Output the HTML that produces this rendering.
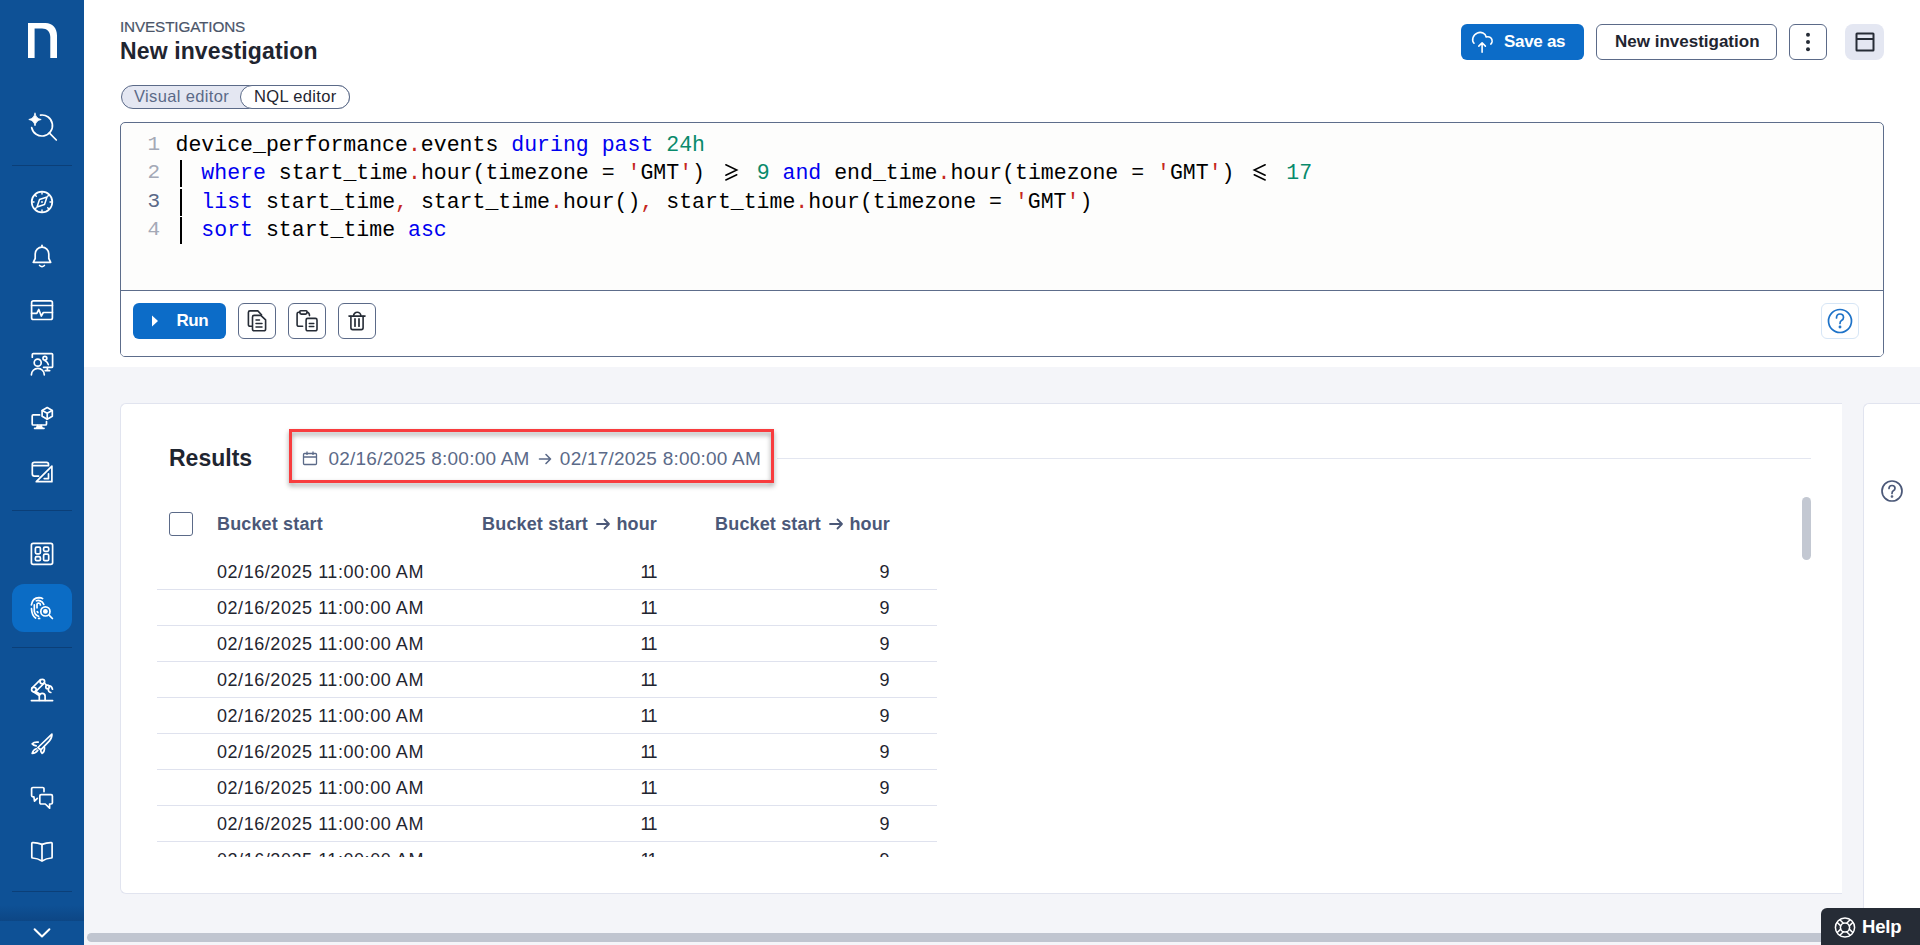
<!DOCTYPE html>
<html><head><meta charset="utf-8">
<style>
*{box-sizing:border-box;margin:0;padding:0}
html,body{width:1920px;height:945px;overflow:hidden;background:#fff;font-family:"Liberation Sans",sans-serif;color:#1f2530}
.abs{position:absolute;white-space:nowrap}
#side{position:absolute;left:0;top:0;width:84px;height:945px;background:#0e5196}
.div{position:absolute;left:12px;width:60px;height:1px;background:#0b3f78}
#active{position:absolute;left:12px;top:584px;width:60px;height:48px;border-radius:12px;background:#0b6cc5}
#graybg{position:absolute;left:84px;top:367px;width:1836px;height:578px;background:#f4f5f9}
.obtn{position:absolute;border:1px solid #5b6a88;border-radius:6px;background:#fff}
.mono{font-family:"Liberation Mono",monospace}
#code{position:absolute;left:120px;top:122px;width:1764px;height:235px;border:1px solid #5d6d8b;border-radius:5px;background:#fdfdfc}
.ln{position:absolute;left:-1px;width:40px;text-align:right;color:#a4a9b6;font-family:"Liberation Mono",monospace;font-size:21px}
.cl{position:absolute;left:54.5px;font-family:"Liberation Mono",monospace;font-size:21.52px;color:#000;white-space:pre}
.k{color:#0000f0}.n{color:#098a6b}.p{color:#c6281e}
.pipe{display:inline-block;width:12.94px;position:relative}
.pipe:before{content:"";position:absolute;left:4.5px;top:-19px;width:2px;height:26.5px;background:#000}
.ge{display:inline-block;width:25.88px;position:relative;color:transparent}
.ge svg{position:absolute;left:0;top:0;overflow:visible}
.arr{position:relative;color:transparent}
.arr svg{position:absolute;left:50%;top:50%;overflow:visible}
.row{position:absolute;left:157px;width:780px;height:1px;background:#dfe2ee}
.rt{position:absolute;font-size:18px;letter-spacing:0.55px;color:#1f2530}
</style></head><body>
<div id="side">
  <svg class="abs" style="left:28px;top:23px" width="29" height="35" viewBox="0 0 29 35"><path d="M0 35 V0 H17.5 C24.5 0 29 5 29 12.5 V35 H22.3 V14 C22.3 8.8 19 5.5 14 5.5 H6.6 V35 Z" fill="#fff"/></svg>
  <div class="div" style="top:165px"></div>
  <div class="div" style="top:510px"></div>
  <div id="active"></div>
  <div class="div" style="top:647px"></div>
  <div class="div" style="top:891px"></div>
  <div class="abs" style="left:0;top:905px;width:84px;height:16px;background:linear-gradient(to bottom,rgba(10,50,100,0),rgba(10,50,100,0.35))"></div>
  <svg class="abs" style="left:0;top:0" width="84" height="945" viewBox="0 0 84 945" fill="none" stroke="#fff" stroke-width="1.7" stroke-linecap="round" stroke-linejoin="round">
    <!-- search sparkle -->
    <path d="M40.5 115.1 A10.5 10.5 0 1 1 31.7 127.7"/>
    <path d="M49.5 133.2 L56.3 140"/>
    <path d="M35 113.2 Q35.9 118.6 41.2 119.5 Q35.9 120.4 35 125.8 Q34.1 120.4 28.8 119.5 Q34.1 118.6 35 113.2 Z" fill="#fff" stroke-width="0.8"/>
    <!-- compass -->
    <circle cx="42" cy="202" r="10.3"/>
    <path d="M42 192.5 V194 M42 210 V211.5 M32.5 202 H34 M50 202 H51.5 M35.3 195.3 L36.3 196.3 M47.7 207.7 L48.7 208.7 M48.7 195.3 L47.7 196.3 M36.3 207.7 L35.3 208.7" stroke-width="1.4"/>
    <path d="M47 197 L44.5 204.5 L37 207 L39.5 199.5 Z" stroke-width="1.5"/>
    <circle cx="42" cy="202" r="0.9" fill="#fff" stroke="none"/>
    <!-- bell -->
    <path d="M33.3 262.3 H50.7 L48.8 258.5 V254 A6.8 6.8 0 0 0 35.2 254 V258.5 Z"/>
    <path d="M42 245.3 V247.2"/><path d="M39.6 265.5 Q42 267.8 44.4 265.5"/>
    <!-- chart -->
    <rect x="31.6" y="300.9" width="20.8" height="18.6" rx="1.8"/>
    <path d="M31.6 305.5 H52.4"/><path d="M31.6 313.3 H36.8 L38.8 309.5 L41.3 316 L43.3 312.5 H52.4"/>
    <!-- people board -->
    <path d="M32.3 357.2 V354.6 A1 1 0 0 1 33.3 353.6 H51.6 A1 1 0 0 1 52.6 354.6 V366.4 A1 1 0 0 1 51.6 367.4 H43.6"/>
    <path d="M47.4 367.6 V370.4 M45.2 370.6 H49.7"/>
    <circle cx="37.7" cy="362.7" r="3.5"/><path d="M31.4 374.8 A6.45 6.45 0 0 1 44.3 374.8"/>
    <circle cx="44.9" cy="358.3" r="1.9"/><path d="M45.2 360.8 Q47.5 361.8 48.3 364.6"/>
    <!-- devices -->
    <path d="M39.6 414.9 H33.2 A1 1 0 0 0 32.2 415.9 V424 A1 1 0 0 0 33.2 425 H45.5 A1 1 0 0 0 46.5 424 V421.6"/>
    <path d="M37.6 425.5 L36.6 428 H42.1 L41.1 425.5" fill="#fff"/><path d="M34.6 428.3 H44"/>
    <path d="M47.2 407.6 L52.3 410.5 V416.3 L47.2 419.2 L42.1 416.3 V410.5 Z"/><path d="M42.3 410.6 L47.2 413.3 L52.1 410.6 M47.2 413.3 V419"/>
    <!-- edit card -->
    <path d="M38.6 476.1 H34.3 A2 2 0 0 1 32.3 474.1 V464.3 A2 2 0 0 1 34.3 462.3 H46.5 A2 2 0 0 1 48.5 464.3 V465.7 H32.3"/>
    <path d="M51.9 466.1 V481.7 H36.3 Z"/><path d="M48.5 473.8 V478.6 H44.2"/>
    <!-- grid -->
    <rect x="31.4" y="543.4" width="21.2" height="21" rx="1.8"/>
    <rect x="35.4" y="547.2" width="5" height="6.6" rx="1.3"/><rect x="43.6" y="547.2" width="5.1" height="4.1" rx="1.3"/>
    <rect x="35.4" y="556.7" width="5" height="4" rx="1.3"/><rect x="43.6" y="554.2" width="5.1" height="6.5" rx="1.3"/>
    <!-- fingerprint -->
    <path d="M31.4 604.8 Q32.5 597.8 39 597.6 Q41.3 597.6 42.6 598.6"/>
    <path d="M31.5 608.7 Q31.8 615.3 35.6 618"/>
    <path d="M36.4 600.8 Q39 599.4 42.4 602.2 Q43.5 603.6 43.8 604.5"/>
    <path d="M34.3 604.9 V611.3 Q34.8 614.8 38.6 616.2"/>
    <path d="M37 607.8 V604.7 Q37 603 38.7 603 Q40.4 603.2 40.4 605"/>
    <path d="M37.2 611.6 L37.9 612.6"/><path d="M38.6 618.4 H39.6"/>
    <circle cx="45.4" cy="611.4" r="4.6"/><circle cx="45.4" cy="611.4" r="2.4" fill="#fff" stroke="none"/>
    <path d="M49.3 615.4 L52.4 618.5"/>
    <!-- robot -->
    <path d="M31.4 700.6 H52.6"/>
    <path d="M39.3 700.3 V696.2 A2.9 2.9 0 0 1 45.1 696.2 V700.3"/>
    <circle cx="33.9" cy="689.6" r="2.3"/><circle cx="42.3" cy="681.6" r="2.3"/>
    <path d="M32 688 L40.5 679.7 M35.6 691.6 L43.9 683.5"/>
    <path d="M35.7 691.5 L40 694.3 M33.8 692 L38.8 695.3"/>
    <path d="M44.3 683 L46.3 685"/>
    <circle cx="47.5" cy="686.9" r="1.7"/>
    <path d="M49 685.8 Q51.6 685.5 52.5 689.2 M48.3 688.6 Q48 692 50.8 692.5"/>
    <!-- rocket -->
    <path d="M37.9 747.5 L51.9 734.2 Q52.3 737.5 49.2 741.2 L40.8 749.9 Z"/>
    <path d="M38.2 742.2 Q34 741.8 32.2 743.9 Q33.5 745.4 36.2 745.8"/>
    <path d="M44.4 747 Q45 751.4 42.1 753.4 Q40.5 751.9 40.6 749.3"/>
    <path d="M36.3 748.7 Q33 749.8 32.2 753.5 Q35.8 753.2 37.8 750.2"/>
    <!-- chat -->
    <path d="M44 791.6 V788.8 A1.3 1.3 0 0 0 42.7 787.5 H32.9 A1.3 1.3 0 0 0 31.6 788.8 V795.5 A1.3 1.3 0 0 0 32.9 796.8 H33.9 L34.5 801.2 L37.3 798.3"/>
    <path d="M41.1 794.7 H51.1 A1.3 1.3 0 0 1 52.4 796 V802.7 A1.3 1.3 0 0 1 51.1 804 H49.6 V808.2 L45.3 804 H41.1 A1.3 1.3 0 0 1 39.8 802.7 V796 A1.3 1.3 0 0 1 41.1 794.7 Z"/>
    <!-- book -->
    <path d="M42 844.4 Q37 842.4 32.6 842.6 Q31.8 842.7 31.8 843.6 V857.2 Q31.8 858 32.6 858 Q37.5 858.3 42 861 Q46.5 858.3 51.3 858 Q52.1 858 52.1 857.2 V843.6 Q52.1 842.7 51.3 842.6 Q47 842.4 42 844.4 Z"/><path d="M42 844.6 V860.5"/>
    <!-- chevron -->
    <path d="M34.6 929.2 L42 936.5 L49.4 929.2" stroke-width="2"/>
  </svg>
</div>
<div id="graybg"></div>

<!-- header -->
<div class="abs" style="left:120px;top:17.6px;font-size:15.3px;color:#4b5569;letter-spacing:-0.15px;-webkit-text-stroke:0.2px #4b5569">INVESTIGATIONS</div>
<div class="abs" style="left:120px;top:38px;font-size:23px;letter-spacing:0.12px;font-weight:bold;color:#1f2530">New investigation</div>

<div class="abs" style="left:1461px;top:24px;width:123px;height:36px;border-radius:6px;background:#0c6cc8"></div>
<svg class="abs" style="left:1470px;top:29px" width="26" height="26" viewBox="0 0 26 26" fill="none" stroke="#fff" stroke-width="1.6" stroke-linecap="round" stroke-linejoin="round">
  <path d="M4 14.2 C1.6 11.8 2.4 5.8 7.4 3.9 C11.4 2.5 15.4 4.3 16.2 8 C19.6 7 22.6 9.4 22.1 12.7 C21.9 13.8 21.4 14.6 20.8 15.1"/>
  <path d="M12.1 23.2 V13.9 M8.8 17.1 L12.1 13.8 L15.4 17.1"/>
</svg>
<div class="abs" style="left:1504px;top:32px;font-size:17px;letter-spacing:-0.3px;font-weight:bold;color:#fff">Save as</div>

<div class="obtn" style="left:1596px;top:24px;width:181px;height:36px"></div>
<div class="abs" style="left:1615px;top:32px;font-size:17px;font-weight:bold;color:#1f2530">New investigation</div>

<div class="obtn" style="left:1789px;top:24px;width:38px;height:36px"></div>
<svg class="abs" style="left:1789px;top:24px" width="38" height="36"><circle cx="19" cy="10.8" r="2" fill="#262c36"/><circle cx="19" cy="18" r="2" fill="#262c36"/><circle cx="19" cy="25.3" r="2" fill="#262c36"/></svg>

<div class="abs" style="left:1845px;top:24px;width:39px;height:36px;border-radius:8px;background:#e4e7f2"></div>
<svg class="abs" style="left:1845px;top:24px" width="39" height="36" fill="none" stroke="#262c36" stroke-width="2"><rect x="11.5" y="9.5" width="17" height="17" rx="0.5"/><path d="M11.5 15 H28.5"/></svg>

<!-- pill -->
<div class="abs" style="left:121px;top:85px;width:229px;height:24px;border:1px solid #5b6a88;border-radius:12px;background:#e4e7f2"></div>
<div class="abs" style="left:240px;top:85px;width:110px;height:24px;border:1px solid #5b6a88;border-radius:12px;background:#fff"></div>
<div class="abs" style="left:134px;top:87px;font-size:16.5px;letter-spacing:0.35px;color:#5b6a88">Visual editor</div>
<div class="abs" style="left:254px;top:87px;font-size:16.5px;letter-spacing:0.35px;color:#1f2530">NQL editor</div>

<!-- code editor -->
<div id="code">
  <div class="ln" style="top:9.5px">1</div>
  <div class="ln" style="top:37.5px">2</div>
  <div class="ln" style="top:66.5px;color:#5b6a88">3</div>
  <div class="ln" style="top:94.5px">4</div>
  <div class="cl" style="top:10px">device_performance<span class="p">.</span>events <span class="k">during</span> <span class="k">past</span> <span class="n">24h</span></div>
  <div class="cl" style="top:38px"><span class="pipe"></span> <span class="k">where</span> start_time<span class="p">.</span>hour(timezone = <span class="p">'</span>GMT<span class="p">'</span>) <span class="ge">≥<svg width="26" height="24" fill="none" stroke="#000" stroke-width="1.5" stroke-linecap="round" stroke-linejoin="miter"><path d="M7.8 3.8 L18.8 9 L7.8 14.2 M7.8 19 L18.8 13.8"/></svg></span> <span class="n">9</span> <span class="k">and</span> end_time<span class="p">.</span>hour(timezone = <span class="p">'</span>GMT<span class="p">'</span>) <span class="ge">≤<svg width="26" height="24" fill="none" stroke="#000" stroke-width="1.5" stroke-linecap="round" stroke-linejoin="miter"><path d="M18.2 3.8 L7.2 9 L18.2 14.2 M18.2 19 L7.2 13.8"/></svg></span> <span class="n">17</span></div>
  <div class="cl" style="top:67px"><span class="pipe"></span> <span class="k">list</span> start_time<span class="p">,</span> start_time<span class="p">.</span>hour()<span class="p">,</span> start_time<span class="p">.</span>hour(timezone = <span class="p">'</span>GMT<span class="p">'</span>)</div>
  <div class="cl" style="top:95px"><span class="pipe"></span> <span class="k">sort</span> start_time <span class="k">asc</span></div>
  <div class="abs" style="left:0;top:167px;width:1762px;height:66px;background:#fff;border-top:1px solid #5d6d8b;border-radius:0 0 4px 4px"></div>
</div>
<div class="abs" style="left:133px;top:303px;width:93px;height:36px;border-radius:6px;background:#0c6cc8"></div>
<svg class="abs" style="left:150px;top:314px" width="10" height="14"><path d="M2 1.5 L8 7 L2 12.5 Z" fill="#fff"/></svg>
<div class="abs" style="left:176.5px;top:311px;font-size:17px;letter-spacing:-0.5px;font-weight:bold;color:#fff">Run</div>
<div class="obtn" style="left:238px;top:303px;width:38px;height:36px"></div>
<div class="obtn" style="left:288px;top:303px;width:38px;height:36px"></div>
<div class="obtn" style="left:338px;top:303px;width:38px;height:36px"></div>
<svg class="abs" style="left:0;top:0" width="400" height="360" fill="none" stroke="#262c36" stroke-width="1.6" stroke-linejoin="round" stroke-linecap="round">
  <path d="M252 326.3 H250 A1.6 1.6 0 0 1 248.4 324.7 V312.5 A1.6 1.6 0 0 1 250 310.9 H257.8 L261.5 314.8"/>
  <path d="M252.5 329.2 V317 A1.6 1.6 0 0 1 254.1 315.4 H260.8 L265.6 319.9 V329.2 A1.6 1.6 0 0 1 264 330.8 H254.1 A1.6 1.6 0 0 1 252.5 329.2 Z"/>
  <path d="M256 320.1 H259.5 M256 323.5 H262 M256 326.9 H262" stroke-width="1.5"/>
  <path d="M302.6 326.3 H298.7 A1.6 1.6 0 0 1 297.1 324.7 V313.8 A1.6 1.6 0 0 1 298.7 312.2 H299.8 M307 312.2 Q309.5 312.4 309.5 315.6"/>
  <path d="M299.8 312.5 V311.6 A0.8 0.8 0 0 1 300.6 310.8 H306.2 A0.8 0.8 0 0 1 307 311.6 V312.6 A1.5 1.5 0 0 1 305.5 314.1 H301.3 A1.5 1.5 0 0 1 299.8 312.6"/>
  <path d="M307.7 318.4 H315.4 A1.6 1.6 0 0 1 317 320 V329.2 A1.6 1.6 0 0 1 315.4 330.8 H307.7 A1.6 1.6 0 0 1 306.1 329.2 V320 A1.6 1.6 0 0 1 307.7 318.4 Z"/>
  <path d="M309.3 323.6 H313.8 M309.3 326.4 H313.8" stroke-width="1.5"/>
  <path d="M349 316.1 H365"/><path d="M353.5 316 A3.7 3.7 0 0 1 360.9 316"/>
  <path d="M350.9 316.3 V327.8 A1.8 1.8 0 0 0 352.7 329.6 H361.3 A1.8 1.8 0 0 0 363.1 327.8 V316.3"/><path d="M355 318.9 V326.2 M359 318.9 V326.2" stroke-width="1.7"/>
</svg>
<div class="abs" style="left:1821px;top:303px;width:38px;height:36px;border:1px solid #d7e6f6;border-radius:6px;background:#fff"></div>
<svg class="abs" style="left:1821px;top:302px" width="38" height="38" fill="none" stroke="#1d72c8" stroke-width="1.7" stroke-linecap="round"><circle cx="19" cy="19" r="11.5"/><path d="M15.5 16 Q15.5 12 19 12 Q22.5 12 22.5 15.5 Q22.5 17.5 20.5 18.5 Q19 19.3 19 21.5"/><circle cx="19" cy="25" r="0.6" fill="#1d72c8"/></svg>

<!-- results card -->
<div class="abs" style="left:120px;top:403px;width:1722px;height:491px;background:#fff;border:1px solid #e1e4ef;border-right:none;border-radius:6px 0 0 6px"></div>
<div class="abs" style="left:1863px;top:403px;width:57px;height:542px;background:#fff;border:1px solid #e1e4ef;border-right:none;border-bottom:none;border-radius:6px 0 0 0"></div>
<svg class="abs" style="left:1880px;top:479px" width="24" height="24" fill="none" stroke="#4b5878" stroke-width="1.7" stroke-linecap="round"><circle cx="12" cy="12" r="10"/><path d="M9 9.5 Q9 6.5 12 6.5 Q15 6.5 15 9.3 Q15 11 13.3 11.8 Q12 12.5 12 14.5"/><circle cx="12" cy="17.5" r="0.5" fill="#4b5878"/></svg>

<div class="abs" style="left:169px;top:445px;font-size:23px;font-weight:bold;color:#1f2530">Results</div>
<div class="abs" style="left:777px;top:458px;width:1034px;height:1px;background:#e3e6f0"></div>
<div class="abs" style="left:289px;top:429px;width:485px;height:54px;border:3px solid #f83c3e;filter:drop-shadow(0 3px 2.5px rgba(0,0,0,0.38))"></div>
<svg class="abs" style="left:302px;top:450px" width="17" height="17" fill="none" stroke="#5b6a88" stroke-width="1.3"><rect x="1.5" y="3.5" width="13" height="11" rx="1"/><path d="M1.5 7 H14.5 M5 1.5 V5 M11 1.5 V5"/></svg>
<div class="abs" style="left:328.5px;top:447.5px;font-size:19px;letter-spacing:0.22px;color:#5b6a88">02/16/2025 8:00:00 AM <span class="arr">→<svg width="16" height="12" style="margin-left:-8px;margin-top:-5px" fill="none" stroke="#5b6a88" stroke-width="1.6" stroke-linecap="round" stroke-linejoin="round"><path d="M2.5 6 H13.5 M9 1.5 L13.5 6 L9 10.5"/></svg></span> 02/17/2025 8:00:00 AM</div>

<div class="abs" style="left:169px;top:512px;width:24px;height:24px;border:1px solid #5b6a88;border-radius:3px;background:#fff"></div>
<div class="abs" style="left:217px;top:514px;font-size:18px;letter-spacing:0.15px;font-weight:bold;color:#4b5878">Bucket start</div>
<div class="abs" style="left:457px;top:514px;width:200px;text-align:right;font-size:18px;letter-spacing:0.15px;font-weight:bold;color:#4b5878">Bucket start <span class="arr">→<svg width="16" height="12" style="margin-left:-7px;margin-top:-6px" fill="none" stroke="#4b5878" stroke-width="1.8" stroke-linecap="round" stroke-linejoin="round"><path d="M2 6 H14 M9.5 1.5 L14 6 L9.5 10.5"/></svg></span> hour</div>
<div class="abs" style="left:690px;top:514px;width:200px;text-align:right;font-size:18px;letter-spacing:0.15px;font-weight:bold;color:#4b5878">Bucket start <span class="arr">→<svg width="16" height="12" style="margin-left:-7px;margin-top:-6px" fill="none" stroke="#4b5878" stroke-width="1.8" stroke-linecap="round" stroke-linejoin="round"><path d="M2 6 H14 M9.5 1.5 L14 6 L9.5 10.5"/></svg></span> hour</div>

<div id="rows" class="abs" style="left:0;top:0;width:1000px;height:857px;overflow:hidden">
<div class="rt" style="left:217px;top:561.7px">02/16/2025 11:00:00 AM</div>
<div class="rt" style="left:556px;top:561.7px;width:100px;text-align:right;letter-spacing:-1.6px">11</div>
<div class="rt" style="left:790px;top:561.7px;width:100px;text-align:right">9</div>
<div class="row" style="top:589px"></div>
<div class="rt" style="left:217px;top:597.7px">02/16/2025 11:00:00 AM</div>
<div class="rt" style="left:556px;top:597.7px;width:100px;text-align:right;letter-spacing:-1.6px">11</div>
<div class="rt" style="left:790px;top:597.7px;width:100px;text-align:right">9</div>
<div class="row" style="top:625px"></div>
<div class="rt" style="left:217px;top:633.7px">02/16/2025 11:00:00 AM</div>
<div class="rt" style="left:556px;top:633.7px;width:100px;text-align:right;letter-spacing:-1.6px">11</div>
<div class="rt" style="left:790px;top:633.7px;width:100px;text-align:right">9</div>
<div class="row" style="top:661px"></div>
<div class="rt" style="left:217px;top:669.7px">02/16/2025 11:00:00 AM</div>
<div class="rt" style="left:556px;top:669.7px;width:100px;text-align:right;letter-spacing:-1.6px">11</div>
<div class="rt" style="left:790px;top:669.7px;width:100px;text-align:right">9</div>
<div class="row" style="top:697px"></div>
<div class="rt" style="left:217px;top:705.7px">02/16/2025 11:00:00 AM</div>
<div class="rt" style="left:556px;top:705.7px;width:100px;text-align:right;letter-spacing:-1.6px">11</div>
<div class="rt" style="left:790px;top:705.7px;width:100px;text-align:right">9</div>
<div class="row" style="top:733px"></div>
<div class="rt" style="left:217px;top:741.7px">02/16/2025 11:00:00 AM</div>
<div class="rt" style="left:556px;top:741.7px;width:100px;text-align:right;letter-spacing:-1.6px">11</div>
<div class="rt" style="left:790px;top:741.7px;width:100px;text-align:right">9</div>
<div class="row" style="top:769px"></div>
<div class="rt" style="left:217px;top:777.7px">02/16/2025 11:00:00 AM</div>
<div class="rt" style="left:556px;top:777.7px;width:100px;text-align:right;letter-spacing:-1.6px">11</div>
<div class="rt" style="left:790px;top:777.7px;width:100px;text-align:right">9</div>
<div class="row" style="top:805px"></div>
<div class="rt" style="left:217px;top:813.7px">02/16/2025 11:00:00 AM</div>
<div class="rt" style="left:556px;top:813.7px;width:100px;text-align:right;letter-spacing:-1.6px">11</div>
<div class="rt" style="left:790px;top:813.7px;width:100px;text-align:right">9</div>
<div class="row" style="top:841px"></div>
<div class="rt" style="left:217px;top:849.7px">02/16/2025 11:00:00 AM</div>
<div class="rt" style="left:556px;top:849.7px;width:100px;text-align:right;letter-spacing:-1.6px">11</div>
<div class="rt" style="left:790px;top:849.7px;width:100px;text-align:right">9</div>
</div>

<div class="abs" style="left:1802px;top:497px;width:9px;height:63px;border-radius:5px;background:#c3c8d2"></div>
<div class="abs" style="left:87px;top:933px;width:1750px;height:9px;border-radius:5px;background:#c0c5d0"></div>

<div class="abs" style="left:1821px;top:908px;width:99px;height:37px;border-radius:6px 0 0 0;background:#262c36"></div>
<svg class="abs" style="left:1833px;top:916px" width="24" height="24" fill="none" stroke="#fff" stroke-width="1.5" stroke-linecap="round"><circle cx="12" cy="11.5" r="9.6"/><circle cx="12" cy="11.5" r="4.6"/><path d="M16.31 13.12 L19.78 16.59 M13.62 15.81 L17.09 19.28 M10.38 15.81 L6.91 19.28 M7.69 13.12 L4.22 16.59 M7.69 9.88 L4.22 6.41 M10.38 7.19 L6.91 3.72 M13.62 7.19 L17.09 3.72 M16.31 9.88 L19.78 6.41"/></svg>
<div class="abs" style="left:1862px;top:916px;font-size:18.5px;letter-spacing:-0.2px;font-weight:bold;color:#fff">Help</div>
</body></html>
